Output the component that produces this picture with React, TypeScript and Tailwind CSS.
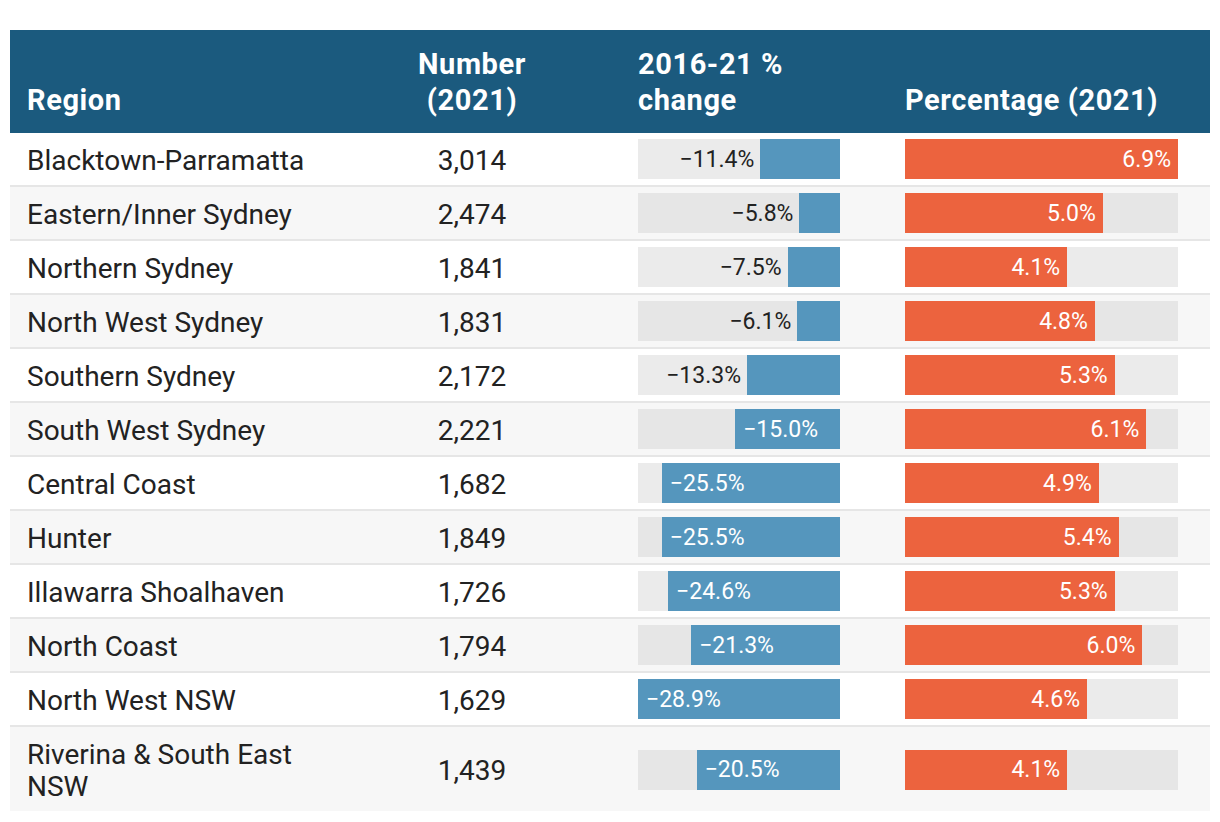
const rows = [
  { region: 'Blacktown-Parramatta', number: '3,014', change: 11.4, pct: 6.9 },
  { region: 'Eastern/Inner Sydney', number: '2,474', change: 5.8, pct: 5.0 },
  { region: 'Northern Sydney', number: '1,841', change: 7.5, pct: 4.1 },
  { region: 'North West Sydney', number: '1,831', change: 6.1, pct: 4.8 },
  { region: 'Southern Sydney', number: '2,172', change: 13.3, pct: 5.3 },
  { region: 'South West Sydney', number: '2,221', change: 15.0, pct: 6.1 },
  { region: 'Central Coast', number: '1,682', change: 25.5, pct: 4.9 },
  { region: 'Hunter', number: '1,849', change: 25.5, pct: 5.4 },
  { region: 'Illawarra Shoalhaven', number: '1,726', change: 24.6, pct: 5.3 },
  { region: 'North Coast', number: '1,794', change: 21.3, pct: 6.0 },
  { region: 'North West NSW', number: '1,629', change: 28.9, pct: 4.6 },
  { region: 'Riverina & South East NSW', number: '1,439', change: 20.5, pct: 4.1 },
];

const MAX_CHANGE = 28.9;
const MAX_PCT = 6.9;

function ChangeBar({ value, grey }: { value: number; grey: boolean }) {
  const width = (value / MAX_CHANGE) * 100;
  const inside = value >= 14;
  const label = `\u2212${value.toFixed(1)}%`;
  return (
    <div className={`flex h-[40px] w-[202px] justify-end ${grey ? 'bg-[#e6e6e6]' : 'bg-[#ebebeb]'}`}>
      {!inside && (
        <span className="mr-[6px] self-center text-[23px] leading-none text-[#222]">{label}</span>
      )}
      <div className="flex h-full items-center bg-[#5596bd] pl-[8px]" style={{ width: `${width}%` }}>
        {inside && <span className="text-[23px] leading-none text-white">{label}</span>}
      </div>
    </div>
  );
}

function PctBar({ value, grey }: { value: number; grey: boolean }) {
  const width = (value / MAX_PCT) * 100;
  return (
    <div className={`flex h-[40px] w-[273px] ${grey ? 'bg-[#e6e6e6]' : 'bg-[#ebebeb]'}`}>
      <div
        className="flex h-full items-center justify-end bg-[#ec633e] pr-[7px]"
        style={{ width: `${width}%` }}
      >
        <span className="text-[23px] leading-none text-white">{value.toFixed(1)}%</span>
      </div>
    </div>
  );
}

export default function App() {
  return (
    <div className="min-h-screen bg-white pl-[10px] pt-[30px] font-['Roboto',sans-serif]">
      <div className="w-[1200px]">
        <div className="flex h-[103px] items-end bg-[#1b5a7e] pb-[15px] text-[29px] font-bold leading-[36px] tracking-[0.02em] text-white">
          <div className="w-[390px] pl-[17px]">Region</div>
          <div className="w-[144px] text-center">
            Number
            <br />
            (2021)
          </div>
          <div className="ml-[94px] w-[202px]">
            2016-21 %
            <br />
            change
          </div>
          <div className="ml-[65px] w-[273px] whitespace-nowrap">Percentage (2021)</div>
        </div>

        {rows.map((r, i) => {
          const grey = i % 2 === 1;
          const last = i === rows.length - 1;
          return (
            <div
              key={r.region}
              className={`flex items-center text-[28px] leading-[32px] text-[#222] ${
                grey ? 'bg-[#f7f7f7]' : 'bg-white'
              } ${last ? 'pt-[9px] pb-[8px]' : 'h-[54px] border-b-2 border-[#e6e6e6]'}`}
            >
              <div className="w-[390px] pl-[17px] pr-[70px] pt-[3px]">{r.region}</div>
              <div className="w-[144px] pt-[3px] text-center">{r.number}</div>
              <div className="ml-[94px]">
                <ChangeBar value={r.change} grey={grey} />
              </div>
              <div className="ml-[65px]">
                <PctBar value={r.pct} grey={grey} />
              </div>
            </div>
          );
        })}
      </div>
    </div>
  );
}
